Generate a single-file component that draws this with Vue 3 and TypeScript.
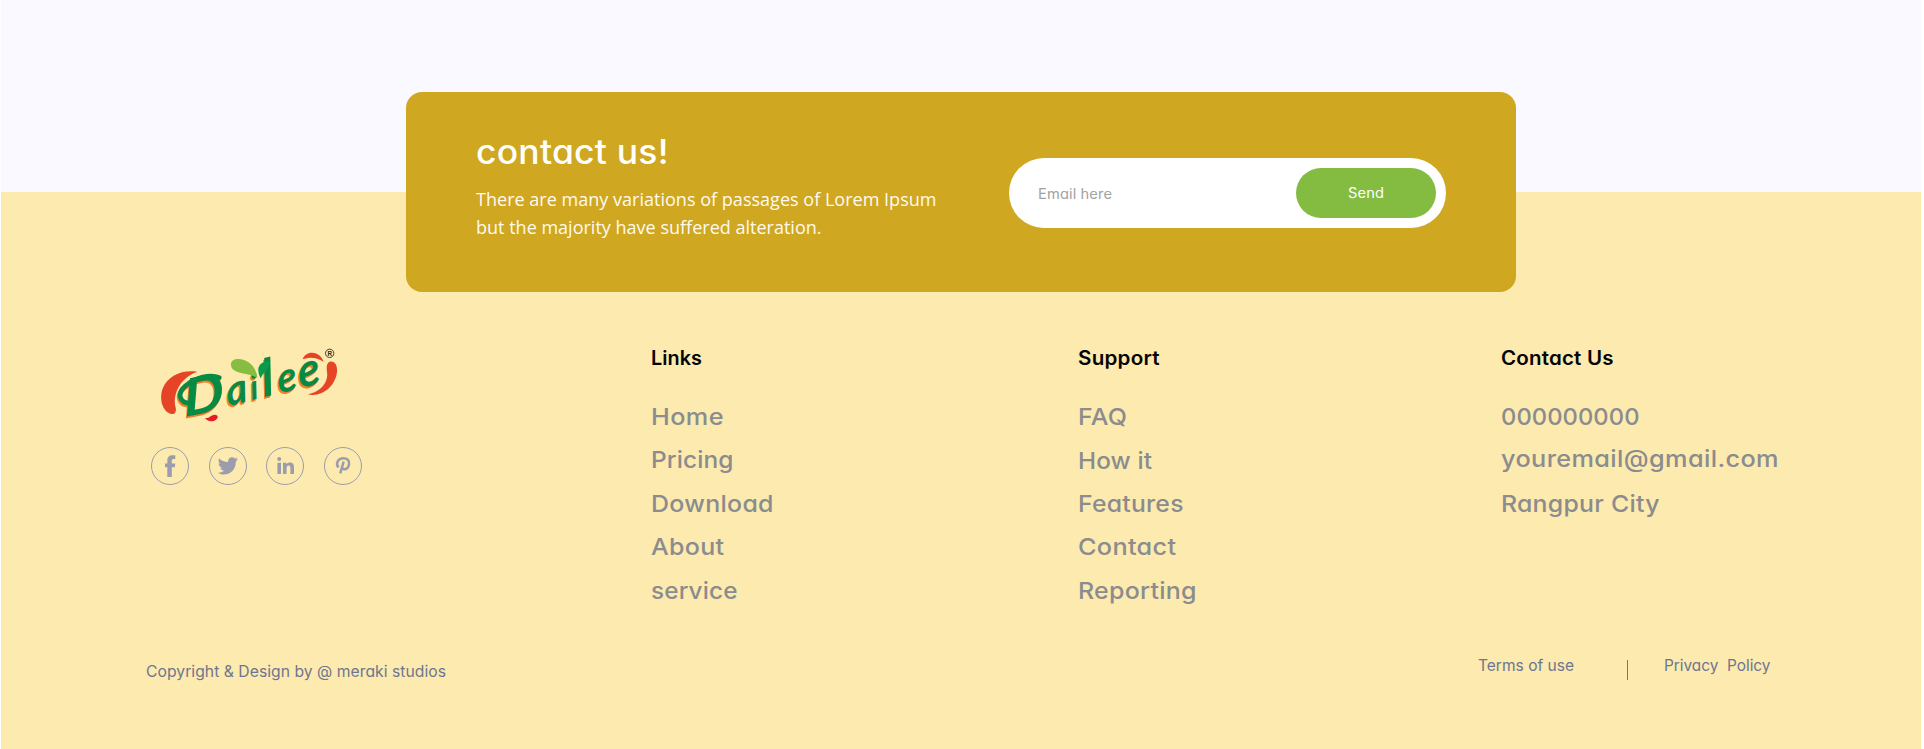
<script setup lang="ts">
import type { Directive } from 'vue'

interface Entry {
  label: string
  width: number
  nudge?: 'low' | 'high'
}

interface Column {
  title: string
  width: number
  entries: Entry[]
}

const columns: Column[] = [
  {
    title: 'Links',
    width: 51,
    entries: [
      { label: 'Home', width: 72.5 },
      { label: 'Pricing', width: 82.5 },
      { label: 'Download', width: 122.5 },
      { label: 'About', width: 73 },
      { label: 'service', width: 86.5 },
    ],
  },
  {
    title: 'Support',
    width: 81.5,
    entries: [
      { label: 'FAQ', width: 49 },
      { label: 'How it', width: 74 },
      { label: 'Features', width: 105.5 },
      { label: 'Contact', width: 98 },
      { label: 'Reporting', width: 118.5 },
    ],
  },
  {
    title: 'Contact Us',
    width: 112.5,
    entries: [
      { label: '000000000', width: 138.5 },
      { label: 'youremail@gmail.com', width: 277.5 },
      { label: 'Rangpur City', width: 158.5 },
    ],
  },
]
columns[1].entries[1].nudge = 'low'
columns[2].entries[1].nudge = 'high'

/** The wordmark is drawn twice: an orange shade below, the green letters above. */
const layers = [
  { tone: 'orange', offset: 'translate(-3 6)' },
  { tone: 'green', offset: 'translate(0 0)' },
]
const letters = [
  { glyph: 'a', x: 2, size: 124 },
  { glyph: 'i', x: 75, size: 104 },
  { glyph: 'l', x: 113, size: 154 },
  { glyph: 'e', x: 160, size: 122 },
  { glyph: 'e', x: 224, size: 138 },
]

/** Widens a label: a little tracking, the rest by stretching the letters. */
const vFit: Directive<HTMLElement, number> = {
  mounted(el, { value }) {
    const count = (el.textContent ?? '').length
    const natural = el.getBoundingClientRect().width
    const tracking = ((value - natural) * 0.25) / count
    el.style.letterSpacing = `${tracking}px`
    el.style.transform = `scaleX(${value / (natural + tracking * (count - 1))})`
  },
}
</script>

<template>
  <div class="page">
    <div class="band"></div>
    <footer class="footer">
      <section class="card">
        <div class="intro">
          <h2><span v-fit="192.5">contact us!</span></h2>
          <p>
            <span v-fit="460.5">There are many variations of passages of Lorem Ipsum</span><br />
            <span v-fit="345.5">but the majority have suffered alteration.</span>
          </p>
        </div>
        <form class="subscribe" @submit.prevent>
          <span class="hint"><span v-fit="74">Email here</span></span>
          <button type="submit"><span v-fit="36">Send</span></button>
        </form>
      </section>

      <div class="columns">
        <div class="brand">
          <svg class="logo" viewBox="0 0 720 300" width="240" height="100">
            <path fill="#e64427" d="M172 110C127 103 85 121 69 158C56 190 67 227 91 236C104 241 110 230 107 218C96 175 123 127 172 110Z" />
            <path fill="#e64427" d="M488 73C494 54 513 49 530 56C541 61 548 70 551 81C530 67 509 65 488 73Z" />
            <path fill="#e64427" d="M569 80C584 76 593 91 591 111C587 151 548 188 503 178C543 171 566 140 561 111C559 96 560 84 569 80Z" />
            <path fill="#e21e26" d="M195 249C208 251 211 240 224 239C237 239 236 252 223 257C211 261 200 257 195 249Z" />
            <g v-for="layer in layers" :key="layer.tone" :class="['word', layer.tone]" :transform="layer.offset">
              <text class="initial" transform="translate(134 246) rotate(-11) skewX(-8)" textLength="122" lengthAdjust="spacingAndGlyphs">D</text>
              <text transform="translate(262 214) rotate(-14) skewX(-6)"><tspan v-for="(letter, i) in letters" :key="i" :x="letter.x" :font-size="letter.size">{{ letter.glyph }}</tspan></text>
              <path class="swash" d="M149 205C119 204 110 176 135 154C162 130 209 115 238 128" />
            </g>
            <path fill="#87bd41" d="M273 92C270 73 293 68 314 76C337 85 350 106 352 129C330 112 278 119 273 92Z" />
            <path fill="#079b4b" d="M388 78C367 78 353 91 355 107C356 118 359 125 363 130C366 112 390 108 388 78Z" />
            <circle cx="569" cy="55" r="12.5" fill="none" stroke="#29271f" stroke-width="2.6" />
            <text class="mark" x="569" y="62" text-anchor="middle">R</text>
          </svg>
          <div class="social">
            <svg viewBox="0 0 38 38"><circle cx="19" cy="19" r="18.5" /><path d="M16.3 30V20.3H14V16.5H16.3V13.6C16.3 10.2 18.2 8.2 21.4 8.2H24.3V12.1H22.4C21.2 12.1 20.8 12.8 20.8 13.9V16.5H24.3L23.8 20.3H20.8V30Z" /></svg>
            <svg viewBox="0 0 38 38"><circle cx="19" cy="19" r="18.5" /><path d="M28.8 12C28.1 12.3 27.4 12.5 26.6 12.6C27.4 12.1 28 11.3 28.3 10.4C27.5 10.9 26.7 11.2 25.8 11.4C23.2 8.6 18.6 10.8 19.1 15.1C15.9 14.9 12.1 13.8 10 11.2C9 13.2 9.7 15.7 11.4 16.8C10.8 16.8 10.2 16.6 9.6 16.3C9.6 18.5 11.2 20.4 13.2 20.9C12.6 21 12 21.1 11.4 21C11.9 22.6 13.6 23.7 15.3 23.8C13.2 25.3 11.1 25.9 8.7 25.7C16.8 30.5 27 25.5 26.8 14.8C27.5 14.1 28.3 13.2 28.8 12Z" /></svg>
            <svg viewBox="0 0 38 38"><circle cx="19" cy="19" r="18.5" /><path d="M11.4 15.8H15V27H11.4ZM17 15.8H20.4V17.3C21.2 16.1 22.4 15.5 24 15.5C26.8 15.5 28 17.3 28 20.3V27H24.4V21C24.4 19.3 23.9 18.5 22.7 18.5C21.3 18.5 20.6 19.5 20.6 21.1V27H17Z" /><path d="M15.2 12.1A2 2 0 1 1 11.2 12.1A2 2 0 1 1 15.2 12.1Z" /></svg>
            <svg viewBox="0 0 38 38"><circle cx="19" cy="19" r="18.5" /><path class="pin" d="M19.7 14.5L16.2 26.3M14.4 20.5C11.2 16.2 14.2 11.2 19.3 11.2C23.4 11.2 25.5 13.8 25.1 17C24.7 20.5 22.4 22.4 20.2 22.2C18.9 22.1 18.1 21.3 17.8 20.2" /></svg>
          </div>
        </div>

        <nav v-for="column in columns" :key="column.title">
          <h3><span v-fit="column.width">{{ column.title }}</span></h3>
          <ul>
            <li v-for="entry in column.entries" :key="entry.label" :class="entry.nudge">
              <span v-fit="entry.width">{{ entry.label }}</span>
            </li>
          </ul>
        </nav>
      </div>

      <div class="legal">
        <span class="copyright"><span v-fit="300">Copyright &amp; Design by @ meraki studios</span></span>
        <div class="policies">
          <span class="terms"><span v-fit="96">Terms of use</span></span>
          <i class="divider"></i>
          <span class="privacy"><span v-fit="106.5">Privacy&nbsp; Policy</span></span>
        </div>
      </div>
    </footer>
  </div>
</template>

<style>
body {
  background: #fff;
  overflow: hidden;
}
</style>

<style scoped>
.page {
  width: 1920px;
  height: 749px;
  margin-left: 1px;
  overflow: hidden;
  font-family: Inter, 'Open Sans', sans-serif;
  font-feature-settings: 'cv11';
}
span {
  display: inline-block;
  transform-origin: left center;
  white-space: nowrap;
}
h2,
h3,
p,
ul {
  margin: 0;
  padding: 0;
}
.band {
  height: 192px;
  background: #faf9ff;
}
.footer {
  display: flow-root;
  height: 557px;
  background: #fdeaaf;
}
.card {
  position: relative;
  box-sizing: border-box;
  display: flex;
  justify-content: space-between;
  width: 1110px;
  height: 200px;
  margin: -100px 0 0 405px;
  padding: 38px 70px 0;
  border-radius: 16px;
  background: #cfa720;
  color: #fff;
}
h2 {
  font-size: 34px;
  font-weight: 500;
  line-height: 44px;
}
p {
  margin-top: 11px;
  font-family: 'Open Sans', 'Noto Sans', sans-serif;
  font-size: 18px;
  line-height: 28px;
  color: #fffaf0;
}
.subscribe {
  box-sizing: border-box;
  display: flex;
  align-items: center;
  justify-content: space-between;
  width: 437px;
  height: 70px;
  margin-top: 28px;
  padding: 0 10px 0 29px;
  border-radius: 35px;
  background: #fff;
}
.hint {
  padding-top: 1px;
  font-size: 14px;
  color: #a2a2a2;
}
button {
  width: 140px;
  height: 50px;
  padding: 0 2px 1px 0;
  border: 0;
  border-radius: 25px;
  background: #84bc41;
  color: #fff;
  font: 400 14px Inter, sans-serif;
}
.columns {
  display: grid;
  grid-template-columns: 510.5px 427px 423.5px 1fr;
  height: 300px;
  margin: 51px 0 0 139px;
}
.logo {
  display: block;
  margin-top: -8px;
  overflow: visible;
}
.word {
  font-family: Lato, sans-serif;
  font-style: italic;
  font-weight: 700;
}
.initial {
  font-size: 154px;
}
.green {
  fill: #078a43;
  stroke: #078a43;
}
.orange {
  fill: #f07f2b;
  stroke: #f07f2b;
}
.word text {
  stroke: none;
}
.swash {
  fill: none;
  stroke-width: 14;
  stroke-linecap: round;
}
.mark {
  font: 700 19px 'Liberation Sans', sans-serif;
  fill: #29271f;
}
.social {
  display: flex;
  gap: 19.6px;
  margin: 12px 0 0 11px;
}
.social svg {
  width: 38px;
  height: 38px;
  fill: #9c9dac;
}
.social circle,
.social .pin {
  fill: none;
  stroke: #9c9dac;
}
.social .pin {
  stroke-width: 2.5;
}
h3 {
  font-size: 19.5px;
  font-weight: 600;
  line-height: 30px;
  color: #050505;
}
ul {
  margin-top: 21.6px;
  list-style: none;
}
li {
  height: 43.6px;
  font-size: 23.5px;
  font-weight: 500;
  line-height: 43.6px;
  color: #8b8c8d;
}
.low {
  line-height: 45.6px;
}
.high {
  line-height: 41.6px;
}
.legal {
  display: flex;
  justify-content: space-between;
  margin: 13px 149.5px 0 144.5px;
  font-size: 15.5px;
  line-height: 20px;
  color: #6d7690;
}
.copyright {
  padding-top: 6px;
}
.policies {
  display: flex;
  width: 294px;
}
.terms {
  width: 151px;
}
.divider {
  width: 1px;
  height: 20px;
  margin-top: 4px;
  background: #6d7690;
}
.privacy {
  margin-left: 36px;
}
</style>
